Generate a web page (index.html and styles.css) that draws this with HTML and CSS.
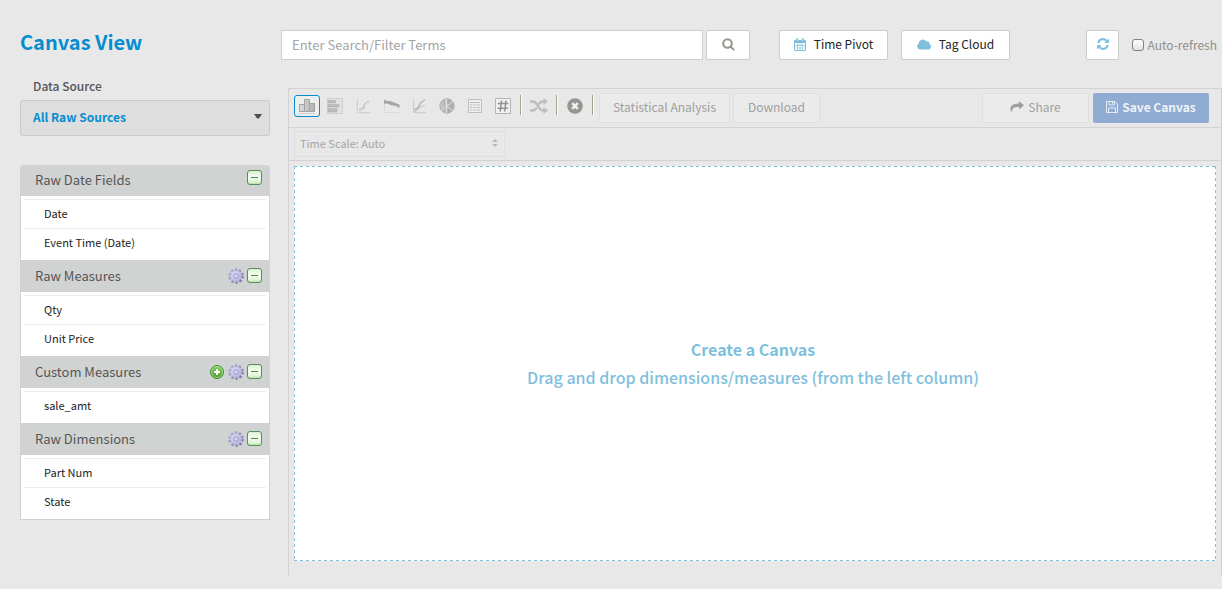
FILE: index.html
```html
<!DOCTYPE html>
<html lang="en">
<head>
<meta charset="utf-8">
<meta name="viewport" content="width=device-width, initial-scale=1">
<title>Canvas View</title>
<link rel="stylesheet" href="styles.css">
</head>
<body>
<svg class="defs" aria-hidden="true">
  <defs>
    <linearGradient id="mint" x1="0" y1="0" x2="0" y2="1"><stop offset="0" stop-color="#d9f0d0"/><stop offset=".45" stop-color="#f4fdf0"/><stop offset=".8" stop-color="#e0f5d8"/><stop offset="1" stop-color="#b4dca5"/></linearGradient>
    <linearGradient id="green" x1="0" y1="0" x2="0" y2="1"><stop offset="0" stop-color="#8ed070"/><stop offset="1" stop-color="#3f9c22"/></linearGradient>
    <linearGradient id="lilac" x1="0" y1="0" x2="1" y2="1"><stop offset="0" stop-color="#dddcf4"/><stop offset="1" stop-color="#b0afdc"/></linearGradient>
    <linearGradient id="teeth" x1="0" y1="0" x2="1" y2="1"><stop offset="0" stop-color="#b5b4dc"/><stop offset="1" stop-color="#7473ae"/></linearGradient>
    <linearGradient id="steel" x1="0" y1="0" x2="1" y2="0"><stop offset="0" stop-color="#dcdcdc"/><stop offset="1" stop-color="#b2b2b2"/></linearGradient>
    <symbol id="minus" viewBox="0 0 15 15"><rect x=".5" y=".5" width="14" height="14" rx="2.5" fill="url(#mint)" stroke="#578d5a"/><path d="M4 7.5h7" stroke="#4f8653"/></symbol>
    <symbol id="gear" viewBox="0 0 16 16"><circle cx="8" cy="8" r="6.3" fill="none" stroke="url(#teeth)" stroke-width="3" stroke-dasharray="2.35 1.61"/><circle cx="8" cy="8" r="5.600" fill="url(#lilac)" stroke="#a3a2d2" stroke-width=".5"/><circle cx="8" cy="8" r="2.300" fill="#c3c2e6" stroke="#9c9bcb" stroke-width=".8"/><circle cx="8" cy="8" r="1" fill="#e6e6f4"/></symbol>
    <symbol id="plus" viewBox="0 0 14 14"><circle cx="7" cy="7" r="6.5" fill="url(#green)" stroke="#3f8f2c"/><circle cx="7" cy="7" r="5.5" fill="none" stroke="#b9e3a6" stroke-width=".7"/><path d="M7 4v6M4 7h6" stroke="#fff" stroke-width="2"/></symbol>
  </defs>
</svg>
<div class="page">
  <aside class="sidebar">
    <h1 class="title">Canvas View</h1>
    <label class="source-label" for="source">Data Source</label>
    <div class="source">
      <select id="source" class="source-select"><option>All Raw Sources</option></select>
      <svg class="source-caret" viewBox="0 0 8 5" width="8" height="5"><path d="M0 0h8L5 4.200Q4 5 3 4.200z" fill="#4d4d4d"/></svg>
    </div>
    <div class="fields">
      <section class="group">
        <div class="group-head"><h2 class="group-name">Raw Date Fields</h2>
          <button class="tool" aria-label="Collapse"><svg width="15" height="15"><use href="#minus"/></svg></button></div>
        <ul class="list"><li class="item">Date</li><li class="item">Event Time (Date)</li></ul>
      </section>
      <section class="group">
        <div class="group-head"><h2 class="group-name">Raw Measures</h2>
          <button class="tool" aria-label="Settings"><svg width="16" height="16"><use href="#gear"/></svg></button>
          <button class="tool" aria-label="Collapse"><svg width="15" height="15"><use href="#minus"/></svg></button></div>
        <ul class="list"><li class="item">Qty</li><li class="item">Unit Price</li></ul>
      </section>
      <section class="group">
        <div class="group-head"><h2 class="group-name">Custom Measures</h2>
          <button class="tool tool-add" aria-label="Add"><svg width="14" height="14"><use href="#plus"/></svg></button>
          <button class="tool" aria-label="Settings"><svg width="16" height="16"><use href="#gear"/></svg></button>
          <button class="tool" aria-label="Collapse"><svg width="15" height="15"><use href="#minus"/></svg></button></div>
        <ul class="list"><li class="item">sale_amt</li></ul>
      </section>
      <section class="group">
        <div class="group-head"><h2 class="group-name">Raw Dimensions</h2>
          <button class="tool" aria-label="Settings"><svg width="16" height="16"><use href="#gear"/></svg></button>
          <button class="tool" aria-label="Collapse"><svg width="15" height="15"><use href="#minus"/></svg></button></div>
        <ul class="list"><li class="item">Part Num</li><li class="item">State</li></ul>
      </section>
    </div>
  </aside>

  <main class="main">
    <header class="topbar">
      <input class="search" type="text" placeholder="Enter Search/Filter Terms" aria-label="Search">
      <button class="btn btn-search" aria-label="Search"><svg width="13" height="13" viewBox="0 0 13 13" fill="none" stroke="#96968e" stroke-width="2"><circle cx="5.500" cy="5.500" r="4.300"/><path d="M8.600 8.600l3 3" stroke-linecap="round"/></svg></button>
      <button class="btn btn-pivot"><svg width="12" height="13" viewBox="0 0 12 13"><path d="M1 2h10a1 1 0 0 1 1 1v9a1 1 0 0 1-1 1H1a1 1 0 0 1-1-1V3a1 1 0 0 1 1-1z" fill="#7fbfdd"/><path d="M1 5h2v2H1zm2.700 0h2v2h-2zm2.700 0h2v2h-2zM9 5h2v2H9zM1 7.700h2v2H1zm2.700 0h2v2h-2zm2.700 0h2v2h-2zm2.600 0h2v2H9zM1 10.300h2V12H1zm2.700 0h2V12h-2zm2.700 0h2V12h-2zm2.600 0h2V12H9z" fill="#fff"/><path d="M3.200 1.100v2.100M8.800 1.100v2.100" stroke="#7fbfdd" stroke-width="2.200" stroke-linecap="round"/><path d="M3.200 1.200v2M8.800 1.200v2" stroke="#fff" stroke-width=".6"/></svg>Time Pivot</button>
      <button class="btn btn-cloud"><svg width="14" height="11" viewBox="0 0 14 11"><path d="M3.200 10.500a3.200 3.200 0 0 1-1.300-6A4 4 0 0 1 9.300 2.400a2.300 2.300 0 0 1 3 2.700 2.800 2.800 0 0 1-1 5.400z" fill="#7fbfdd"/></svg>Tag Cloud</button>
      <span class="spacer"></span>
      <button class="btn btn-refresh" aria-label="Refresh"><svg width="12" height="12" viewBox="0 0 12 12" fill="none" stroke="#7fbfdd" stroke-width="2"><path d="M1.200 5A4.800 4.800 0 0 1 9.600 2.900M10.800 7a4.800 4.800 0 0 1-8.400 2.100"/><path d="M11.900.5v4.500H7.400zM.1 11.500V7h4.500z" fill="#7fbfdd" stroke="none"/></svg></button>
      <label class="auto"><input class="auto-box" type="checkbox">Auto-refresh</label>
    </header>

    <section class="panel">
      <div class="toolbar">
        <button class="chart chart-on" aria-label="Column chart"><svg width="18" height="16" viewBox="0 0 18 16"><path d="M1.500 6.500h5v7h-5zM6.500 1.500h5v12h-5zM11.500 5.500h5v8h-5z" fill="url(#steel)" stroke="#a2a2a2"/><path d="M1 15.500h16" stroke="#d0d0d0"/></svg></button>
        <button class="chart" aria-label="Bar chart"><svg width="16" height="16" viewBox="0 0 16 16"><path d="M.5.5h15v15H.5z" fill="#e2e2e2" stroke="#cfcfcf"/><path d="M1 2.500h7.500V5H1zM1 6.500h11V9H1zM1 10.500h9V14H1z" fill="#bcbcbc" stroke="#ababab" stroke-width=".5"/></svg></button>
        <button class="chart" aria-label="Line chart"><svg width="16" height="16" viewBox="0 0 16 16" fill="none"><path d="M2.500 1v13.500H15M1 3.500h1M1 6.500h1M1 9.500h1M5.500 15v1M8.500 15v1M11.500 15v1" stroke="#d2d2d2"/><path d="M4 11.500c3-.5 4-1 5-4S12 4 14 3.500" stroke="#bcbcbc" stroke-width="1.200"/><path d="M4 13c4 0 3-3 7-3.500" stroke="#cdcdcd"/></svg></button>
        <button class="chart" aria-label="Area chart"><svg width="17" height="16" viewBox="0 0 17 16"><path d="M1.500 1v14M1 14.500h15.500" stroke="#dadada"/><path d="M1 1.500c2 1 3 1.500 5 1.500s4 1.500 10.500 3.500v3.500C14 8 11 7.500 8.500 7.200S5 4.500 1 6z" fill="#a6a6a6"/></svg></button>
        <button class="chart" aria-label="Combined chart"><svg width="16" height="16" viewBox="0 0 16 16" fill="none"><path d="M2.500 1v13.500H15M5.500 15v1M8.500 15v1M11.500 15v1" stroke="#cdcdcd"/><path d="M3 11.500c3 0 4.500-1 5.500-4.500S12 3.500 14 2" stroke="#acacac" stroke-width="1.200"/><path d="M3 13.500c4 0 4-4 7-5s3-.5 4-1.500" stroke="#c2c2c2"/></svg></button>
        <button class="chart" aria-label="Pie chart"><svg width="16" height="16" viewBox="0 0 16 16"><circle cx="8" cy="8" r="7.200" fill="#b4b4b4" stroke="#a6a6a6" stroke-width=".8"/><path d="M7 1.500v6L2.500 12A7 7 0 0 1 7 1.500z" fill="#c6c6c6"/><path d="M7.500 1v7L2.500 13M7.500 8v7M7.500 8l6-4.500M7.500 8l6 4" stroke="#e2e2e2" fill="none"/><path d="M5 2.500v6M10 2v4M10 11v3.500M12.500 7v4" stroke="#9c9c9c" stroke-width=".7"/></svg></button>
        <button class="chart" aria-label="Table"><svg width="14" height="14" viewBox="0 0 14 14"><path d="M.5.5h13v13H.5z" fill="#efefef" stroke="#bdbdbd"/><path d="M2 3h10v1H2zM2 5.500h2.500v1H2zm3.300 0h3v1h-3zm3.700 0h3v1H9zM2 8h2.500v1H2zm3.300 0h3v1h-3zM9 8h3v1H9zM2 10.500h2.500v1H2zm3.300 0h3v1h-3zm3.700 0h3v1H9z" fill="#bdbdbd"/></svg></button>
        <button class="chart" aria-label="Number"><svg width="16" height="16" viewBox="0 0 16 16"><path d="M.5.5h15v15H.5z" fill="#f0f0f0" stroke="#b5b5b5"/><path d="M6.500 2.500l-1.300 11M11 2.500l-1.300 11M2.800 5.500h10.500M2.500 10.200H13" fill="none" stroke="#939393" stroke-width="1.600"/></svg></button>
        <span class="sep"></span>
        <button class="chart" aria-label="Shuffle"><svg width="18" height="16" viewBox="0 0 18 16"><path d="M0 3.500h3c5 0 5 9 10 9h1M0 12.500h3c2 0 3-1.500 3.800-3M8.800 6.500c.8-1.500 2-3 4.200-3h1" fill="none" stroke="#bdbdbb" stroke-width="2.400"/><path d="M13.500 0L18 3.500 13.500 7zM13.500 9l4.500 3.500-4.500 3.500z" fill="#bdbdbb"/></svg></button>
        <span class="sep"></span>
        <button class="chart" aria-label="Clear"><svg width="16" height="16" viewBox="0 0 16 16"><circle cx="8" cy="8" r="7.800" fill="#969690"/><path d="M5.200 5.200l5.600 5.600M10.800 5.200l-5.600 5.600" stroke="#f0f0f0" stroke-width="2.500"/></svg></button>
        <span class="sep"></span>
        <button class="flat flat-stat">Statistical Analysis</button>
        <button class="flat flat-down">Download</button>
        <span class="spacer"></span>
        <button class="flat flat-share"><svg width="14" height="12" viewBox="0 0 14 12"><path d="M9 0l5 4.200L9 8.500V6C5 5.800 2.300 6.500 1.700 11.500-1 7 .5 2.500 9 2.500z" fill="#a0a0a0"/></svg>Share</button>
        <button class="save"><svg width="12" height="12" viewBox="0 0 12 12" fill="none" stroke="#e4ebf5"><path d="M.5.500h8.500L11.500 3v8.500H.5z"/><path d="M3 .5v3.500h5.500V.5M2.500 11.500V7h7v4.500M6.700 1v2.200"/></svg>Save Canvas</button>
      </div>
      <div class="scalebar">
        <div class="scale">
          <select class="scale-select" aria-label="Time scale"><option>Time Scale: Auto</option></select>
          <svg class="scale-arrows" width="6" height="8" viewBox="0 0 6 8"><path d="M3 0l3 3H0zM0 5h6L3 8z" fill="#b9b9b9"/></svg>
        </div>
      </div>
      <div class="drop">
        <p class="drop-title">Create a Canvas</p>
        <p class="drop-text">Drag and drop dimensions/measures (from the left column)</p>
      </div>
    </section>
  </main>
</div>
</body>
</html>
```
FILE: styles.css
```css
* { box-sizing: border-box; }

body {
  margin: 0;
  background: #e8e8e8;
  color: #333;
  font: 12px/20px "Noto Sans CJK SC", "Open Sans", sans-serif;
}

button, input, select { font: inherit; margin: 0; }
button { padding: 0; border: 0; background: none; cursor: pointer; }
svg { display: block; flex: none; }
h1, h2, p, ul { margin: 0; padding: 0; }
.defs { position: absolute; width: 0; height: 0; }
.spacer { flex: 1; }

.page { display: flex; min-height: 100vh; padding: 30px 0 14px 20px; }

/* Sidebar */
.sidebar { flex: none; width: 250px; }
.title { font-size: 20px; line-height: 24px; font-weight: 700; color: #058dd0; }
.source-label { display: block; margin: 22px 0 4px 13px; font-weight: 500; color: #555; }
.source { position: relative; }
.source-select {
  appearance: none;
  display: block;
  width: 100%;
  height: 36px;
  padding: 0 24px 2px 12px;
  border: 1px solid #cbcbcb;
  border-radius: 3px;
  background: #dedede;
  color: #058dd0;
  font-weight: 700;
}
.source-caret { position: absolute; right: 8px; top: 14px; }

.fields { margin-top: 29px; border: solid #d1d3d3; border-width: 0 1px 1px; border-radius: 3px 3px 0 0; background: #fff; overflow: hidden; }
.group-head { display: flex; align-items: center; gap: 3px; height: 32px; padding: 0 7px 0 14px; background: #d1d3d2; }
.group:first-child .group-head { height: 31px; padding-bottom: 2px; }
.group-name { flex: 1; font-size: 13px; font-weight: 400; color: #555; }
.tool { padding-bottom: 1px; }
.group:first-child .tool { padding-bottom: 4px; }
.tool-add { margin-right: 1px; }
.list { list-style: none; padding: 3px; }
.item { height: 29px; padding-left: 20px; border-top: 1px solid #ececec; font-size: 11px; line-height: 27px; color: #222; }

/* Main column */
.main { flex: 1; min-width: 0; display: flex; flex-direction: column; padding-left: 18px; }
.topbar { display: flex; align-items: center; height: 30px; margin: 0 5px 28px -7px; }
.search { flex: 0 1 422px; min-width: 0; height: 30px; padding: 0 10px 2px; border: 1px solid #cfcfcf; background: #fff; font-size: 13px; }
.search::placeholder { color: #a4a4a4; }
.btn { display: flex; align-items: center; justify-content: center; gap: 8px; height: 30px; padding-bottom: 2px; border: 1px solid #cbcbcb; border-radius: 2px; background: #fff; color: #222; white-space: nowrap; }
.btn-search { width: 44px; margin-left: 3px; }
.btn-pivot { width: 109px; margin-left: 29px; }
.btn-cloud { width: 109px; margin-left: 13px; }
.btn-refresh { width: 33px; }
.auto { display: flex; align-items: center; margin-left: 13px; padding-bottom: 1px; color: #8f8f8b; white-space: nowrap; }
.auto-box { appearance: none; width: 12px; height: 12px; margin-right: 3px; border: 1px solid #808080; border-radius: 3px; background: linear-gradient(#fff, #e2e2e2); }
.auto-box:checked { background: #7fbfdd; }

.panel { flex: 1; display: flex; flex-direction: column; padding-bottom: 14px; border: 1px solid #d2d2d2; border-bottom: 0; }
.toolbar { display: flex; align-items: center; gap: 2px; height: 39px; padding: 0 12px 0 5px; border-bottom: 1px solid #d2d2d2; }
.chart { display: flex; align-items: center; justify-content: center; width: 26px; height: 22px; margin-bottom: 4px; border-radius: 3px; }
.chart-on { border: 1px solid #058dd0; background: #eee; }
.sep { width: 2px; height: 20px; margin: 0 2px 6px; border-left: 1px solid #a5a58e; background: #fff; }
.flat { display: flex; align-items: center; justify-content: center; gap: 4px; height: 30px; padding-bottom: 2px; border: 1px solid #dedede; border-radius: 2px; background: #ebebeb; color: #a0a0a0; white-space: nowrap; }
.flat-stat { width: 131px; margin-left: 1px; }
.flat-down { width: 87px; margin-left: 1px; }
.flat-share { width: 107px; }
.save { display: flex; align-items: center; justify-content: center; gap: 4px; width: 116px; height: 30px; margin-left: 2px; padding-bottom: 2px; border-radius: 2px; background: #91acd3; color: #eef2f8; font-weight: 700; white-space: nowrap; }

.scalebar { height: 33px; padding: 3px 5px; border-bottom: 1px solid #d2d2d2; }
.scale { position: relative; width: 211px; }
.scale-select { appearance: none; display: block; width: 100%; height: 26px; padding: 0 20px 2px 5px; border: 1px solid #dfdfdf; background: #e8e8e8; color: #a5a5a5; font-size: 11px; }
.scale-arrows { position: absolute; right: 7px; top: 8px; }

.drop {
  flex: 1;
  display: flex;
  flex-direction: column;
  align-items: center;
  justify-content: center;
  margin: 5px 5px 0;
  padding: 0 4px 2px 0;
  text-align: center;
  color: #7fbfdd;
  font-size: 16px;
  line-height: 28px;
  background:
    repeating-linear-gradient(90deg, #7fbfdd 0 3px, transparent 3px 6px) top / 100% 1px no-repeat,
    repeating-linear-gradient(90deg, #7fbfdd 0 3px, transparent 3px 6px) bottom / 100% 1px no-repeat,
    repeating-linear-gradient(#7fbfdd 0 3px, transparent 3px 6px) left / 1px 100% no-repeat,
    repeating-linear-gradient(#7fbfdd 0 3px, transparent 3px 6px) right / 1px 100% no-repeat,
    #fff;
}
.drop-title { font-weight: 700; }
.drop-text { font-weight: 500; }
```
